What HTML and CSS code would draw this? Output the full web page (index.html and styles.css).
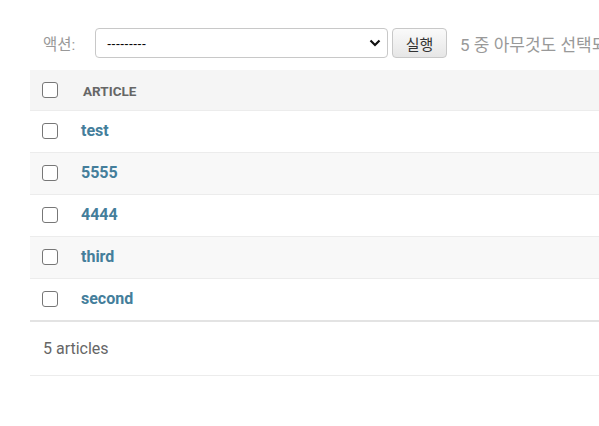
FILE: index.html
```html
<!DOCTYPE html>
<html lang="ko">
<head>
<meta charset="utf-8">
<link rel="stylesheet" href="styles.css">
</head>
<body>
<div class="changelist">
  <div class="actions">
    <label class="action-label">액션:</label>
    <div class="select">
      <span class="select-text">---------</span>
      <svg class="chevron" width="12" height="8" viewBox="0 0 12 8"><path d="M1.5 1.5 L6 6 L10.5 1.5" fill="none" stroke="#111" stroke-width="2.2"/></svg>
    </div>
    <button class="go">실행</button>
    <span class="counter">5 중 아무것도 선택되지 않음</span>
  </div>
  <div class="table">
    <div class="row head">
      <span class="cb"></span>
      <span class="col-title">ARTICLE</span>
    </div>
    <div class="row"><span class="cb"></span><a class="link">test</a></div>
    <div class="row alt"><span class="cb"></span><a class="link">5555</a></div>
    <div class="row"><span class="cb"></span><a class="link">4444</a></div>
    <div class="row alt"><span class="cb"></span><a class="link">third</a></div>
    <div class="row last"><span class="cb"></span><a class="link">second</a></div>
  </div>
  <div class="paginator">5 articles</div>
</div>
</body>
</html>
```
FILE: styles.css
```css
html, body {
  margin: 0;
  padding: 0;
  background: #fff;
  overflow: hidden;
}
body {
  font-family: Roboto, "Noto Sans CJK KR", sans-serif;
  width: 599px;
  height: 426px;
}
.changelist {
  margin-left: 30px;
  width: 720px;
  padding-top: 28px;
}
.actions {
  display: flex;
  align-items: center;
  height: 30px;
  padding-left: 13px;
  margin-bottom: 12px;
}
.action-label {
  color: #999;
  font-size: 15.5px;
  width: 52px;
}
.select {
  box-sizing: border-box;
  width: 293px;
  height: 30px;
  border: 1px solid #c8c8c8;
  border-radius: 4px;
  display: flex;
  align-items: center;
  justify-content: space-between;
  padding: 0 6px 0 11px;
  background: #fff;
}
.select-text {
  font-family: "Liberation Sans", Arial, sans-serif;
  font-size: 13px;
  color: #000;
}
.go {
  box-sizing: border-box;
  margin-left: 4px;
  width: 55px;
  height: 30px;
  border: 1px solid #c8c8c8;
  border-radius: 4px;
  background: linear-gradient(#fafafa, #e6e6e6);
  font-family: "Noto Sans CJK KR", sans-serif;
  font-size: 15px;
  color: #333;
  padding: 0;
}
.counter {
  margin-left: 13px;
  white-space: nowrap;
  color: #999;
  font-size: 17px;
}
.row {
  display: flex;
  align-items: center;
  height: 41px;
  border-bottom: 1px solid #ececec;
  padding-left: 12px;
}
.row.alt {
  background: #f8f8f8;
}
.row.head {
  height: 40px;
  background: #f5f5f5;
}
.row.last {
  border-bottom: 2px solid #e3e3e3;
}
.cb {
  box-sizing: border-box;
  width: 16px;
  height: 16px;
  border: 1px solid #777;
  border-radius: 3px;
  background: #fff;
  flex: none;
  margin-top: -1px;
}
.col-title {
  margin-left: 25px;
  font-size: 13.5px;
  font-weight: 700;
  color: #666;
  padding-top: 1px;
}
.link {
  margin-left: 23px;
  font-size: 16px;
  font-weight: 700;
  color: #447e9b;
  margin-top: -3px;
}
.paginator {
  height: 53px;
  display: flex;
  align-items: center;
  padding-left: 13px;
  border-bottom: 1px solid #ececec;
  color: #666;
  font-size: 16px;
}
```
